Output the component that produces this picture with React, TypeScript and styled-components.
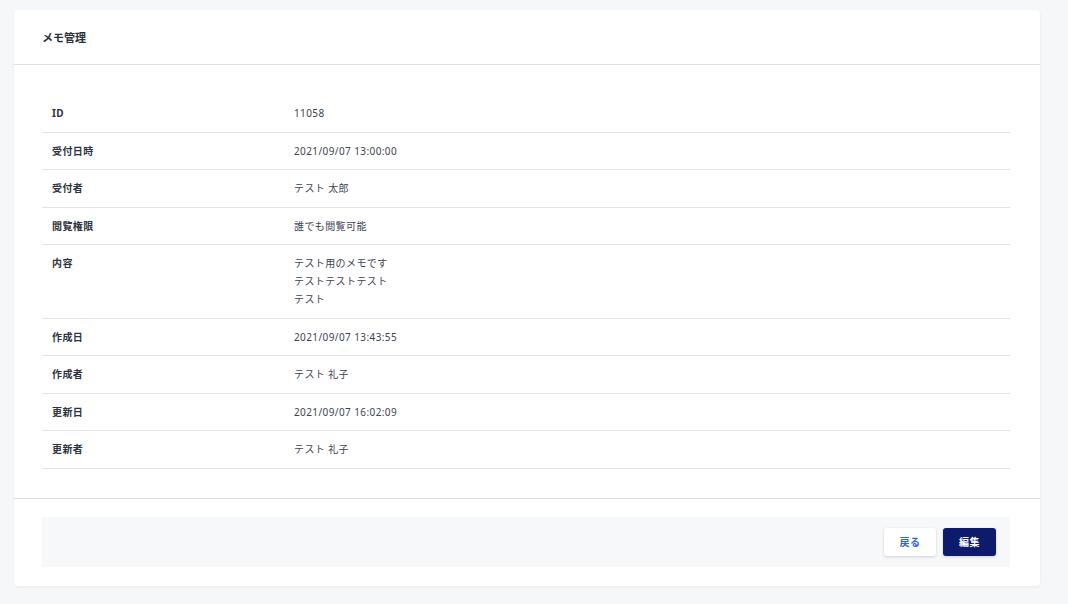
import React from 'react';
import styled, { createGlobalStyle } from 'styled-components';

const FONT = `'Noto Sans', 'Noto Sans CJK JP', sans-serif`;

const GlobalStyle = createGlobalStyle`
  html, body {
    margin: 0;
    padding: 0;
    background: #f6f7f9;
    font-family: ${FONT};
  }
`;

type Row = { label: string; value: string[] };

const ROWS: Row[] = [
  { label: 'ID', value: ['11058'] },
  { label: '受付日時', value: ['2021/09/07 13:00:00'] },
  { label: '受付者', value: ['テスト 太郎'] },
  { label: '閲覧権限', value: ['誰でも閲覧可能'] },
  { label: '内容', value: ['テスト用のメモです', 'テストテストテスト', 'テスト'] },
  { label: '作成日', value: ['2021/09/07 13:43:55'] },
  { label: '作成者', value: ['テスト 礼子'] },
  { label: '更新日', value: ['2021/09/07 16:02:09'] },
  { label: '更新者', value: ['テスト 礼子'] },
];

const App = () => {
  return (
    <>
      <GlobalStyle />
      <Page>
        <Card>
          <Header>
            <Title>メモ管理</Title>
          </Header>
          <Body>
            <Table>
              <tbody>
                {ROWS.map((row) => (
                  <tr key={row.label}>
                    <LabelCell>{row.label}</LabelCell>
                    <ValueCell>
                      {row.value.map((line, i) => (
                        <Line key={i}>{line}</Line>
                      ))}
                    </ValueCell>
                  </tr>
                ))}
              </tbody>
            </Table>
          </Body>
          <Footer>
            <ActionBar>
              <Button variant="secondary">戻る</Button>
              <Button variant="primary">編集</Button>
            </ActionBar>
          </Footer>
        </Card>
      </Page>
    </>
  );
};

const Page = styled.div`
  padding: 10px 28px 18px 14px;
`;

const Card = styled.div`
  background: #ffffff;
  border-radius: 4px;
  box-shadow: 0 1px 3px rgba(30, 40, 60, 0.06);
`;

const Header = styled.div`
  height: 54px;
  padding: 0 30px 0 28px;
  display: flex;
  align-items: center;
  border-bottom: 1px solid #dedfe2;
`;

const Title = styled.h1`
  margin: 0;
  font-size: 11px;
  font-weight: 700;
  color: #2a2f3a;
`;

const Body = styled.div`
  padding: 30px 30px 29px 28px;
  border-bottom: 1px solid #dedfe2;
`;

const Table = styled.table`
  width: 100%;
  border-collapse: collapse;

  tr {
    border-bottom: 1px solid #e3e4e7;
  }
`;

const LabelCell = styled.th`
  width: 25%;
  padding: 11px 10px 10.5px;
  text-align: left;
  vertical-align: top;
  font-size: 10px;
  line-height: 15px;
  font-weight: 700;
  letter-spacing: 0.04em;
  color: #2d3340;
`;

const ValueCell = styled.td`
  padding: 11px 10px 10.5px;
  vertical-align: top;
  font-size: 10px;
  line-height: 15px;
  letter-spacing: 0.04em;
  color: #3d4352;
`;

const Line = styled.div`
  & + & {
    margin-top: 3px;
  }
`;

const Footer = styled.div`
  padding: 18px 30px 19px 28px;
`;

const ActionBar = styled.div`
  height: 50px;
  background: #f7f8fa;
  display: flex;
  align-items: center;
  justify-content: flex-end;
  gap: 7px;
  padding: 0 14px;
`;

const Button = styled.button<{ variant: 'primary' | 'secondary' }>`
  height: 28px;
  width: ${(p) => (p.variant === 'primary' ? '53px' : '52px')};
  border: none;
  border-radius: 3px;
  font-family: ${FONT};
  font-size: 10px;
  font-weight: 700;
  letter-spacing: 0.04em;
  cursor: pointer;
  background: ${(p) => (p.variant === 'primary' ? '#0e1a6c' : '#ffffff')};
  color: ${(p) => (p.variant === 'primary' ? '#ffffff' : '#2b63e0')};
  box-shadow: 0 1px 3px rgba(20, 30, 60, 0.18);
`;

export default App;
